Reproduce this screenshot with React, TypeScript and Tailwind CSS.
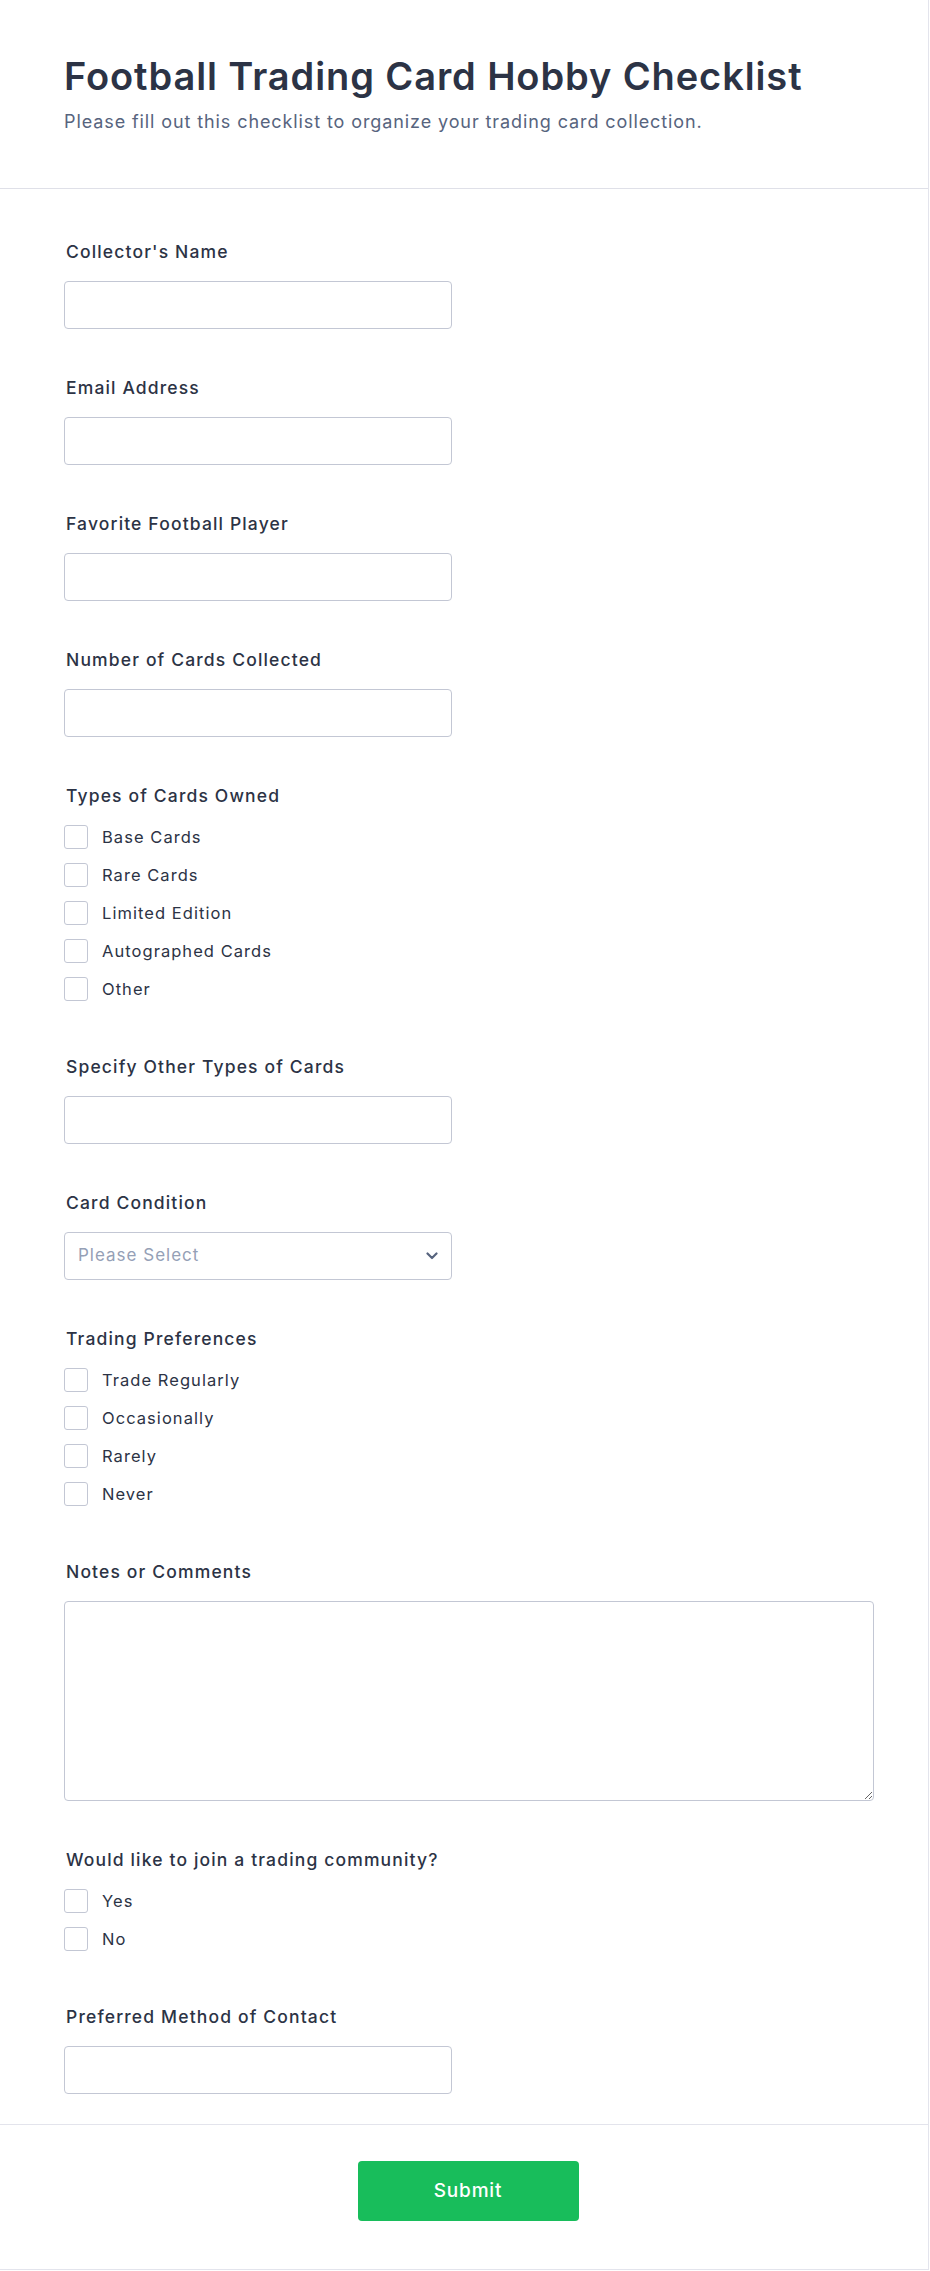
import { ReactNode } from "react"

const textFields = ["Collector's Name", "Email Address", "Favorite Football Player", "Number of Cards Collected"]
const cardTypes = ["Base Cards", "Rare Cards", "Limited Edition", "Autographed Cards", "Other"]
const tradingPrefs = ["Trade Regularly", "Occasionally", "Rarely", "Never"]

function Label({ children }: { children: ReactNode }) {
  return <label className="block h-6 leading-6 text-[17.5px] tracking-[1.15px] font-medium text-[#2c3345] pl-[2px]">{children}</label>
}

function TextField({ label, last }: { label: string; last?: boolean }) {
  return (
    <div className={last ? "" : "mb-[47px]"}>
      <Label>{label}</Label>
      <input type="text" className="mt-[17px] block w-[388px] h-12 rounded-[4px] border border-[#c3c7d4] bg-white px-3 outline-none" />
    </div>
  )
}

function CheckGroup({ label, options }: { label: string; options: string[] }) {
  return (
    <div className="mb-[54px]">
      <Label>{label}</Label>
      <div className="mt-[17px] flex flex-col gap-[14px]">
        {options.map((o) => (
          <label key={o} className="flex items-center gap-[14px] h-6">
            <span className="w-6 h-6 rounded-[3px] border border-[#c3c7d4] bg-white shrink-0" />
            <span className="text-[16.5px] tracking-[1.05px] text-[#2c3345] leading-6">{o}</span>
          </label>
        ))}
      </div>
    </div>
  )
}

export default function App() {
  return (
    <div className="min-h-screen bg-white" style={{ fontFamily: "Inter, 'Noto Sans', sans-serif" }}>
      <div className="w-[929px] border-r border-b border-[#e3e4ec]">
        <header className="pl-16 pr-14 pt-[55px] pb-[53px] border-b border-[#dfe0e8]">
          <h1 className="text-[38px] leading-[43px] tracking-[0.9px] font-semibold text-[#2c3345]">Football Trading Card Hobby Checklist</h1>
          <p className="mt-[10px] text-[18px] leading-[27px] tracking-[0.9px] text-[#57647e]">Please fill out this checklist to organize your trading card collection.</p>
        </header>

        <div className="pl-16 pr-14 pt-[51px] pb-[30px]">
          {textFields.map((f) => (
            <TextField key={f} label={f} />
          ))}

          <CheckGroup label="Types of Cards Owned" options={cardTypes} />

          <TextField label="Specify Other Types of Cards" />

          <div className="mb-[47px]">
            <Label>Card Condition</Label>
            <div className="relative mt-[17px] w-[388px]">
              <select className="block w-full h-12 appearance-none rounded-[4px] border border-[#c3c7d4] bg-white pl-[13px] pr-10 text-[17px] tracking-[1px] text-[#95a0b6] outline-none">
                <option>Please Select</option>
                <option>Mint</option>
                <option>Near Mint</option>
                <option>Excellent</option>
                <option>Good</option>
                <option>Poor</option>
              </select>
              <svg className="pointer-events-none absolute right-[14px] top-[20px]" width="12" height="8" viewBox="0 0 12 8" fill="none">
                <path d="M1.5 1.5 L6 6 L10.5 1.5" stroke="#57647e" strokeWidth="2.2" strokeLinecap="round" strokeLinejoin="round" />
              </svg>
            </div>
          </div>

          <CheckGroup label="Trading Preferences" options={tradingPrefs} />

          <div className="mb-[47px]">
            <Label>Notes or Comments</Label>
            <textarea className="mt-[17px] block w-[810px] h-[200px] rounded-[4px] border border-[#c3c7d4] bg-white p-3 outline-none" />
          </div>

          <CheckGroup label="Would like to join a trading community?" options={["Yes", "No"]} />

          <TextField label="Preferred Method of Contact" last />
        </div>

        <footer className="border-t border-[#e3e4ec] pl-16 pr-14 pt-[36px] pb-[48px] flex justify-center">
          <button className="w-[221px] h-[60px] rounded-[4px] bg-[#18bd5b] text-white text-[19px] tracking-[0.8px] font-medium">Submit</button>
        </footer>
      </div>
    </div>
  )
}
